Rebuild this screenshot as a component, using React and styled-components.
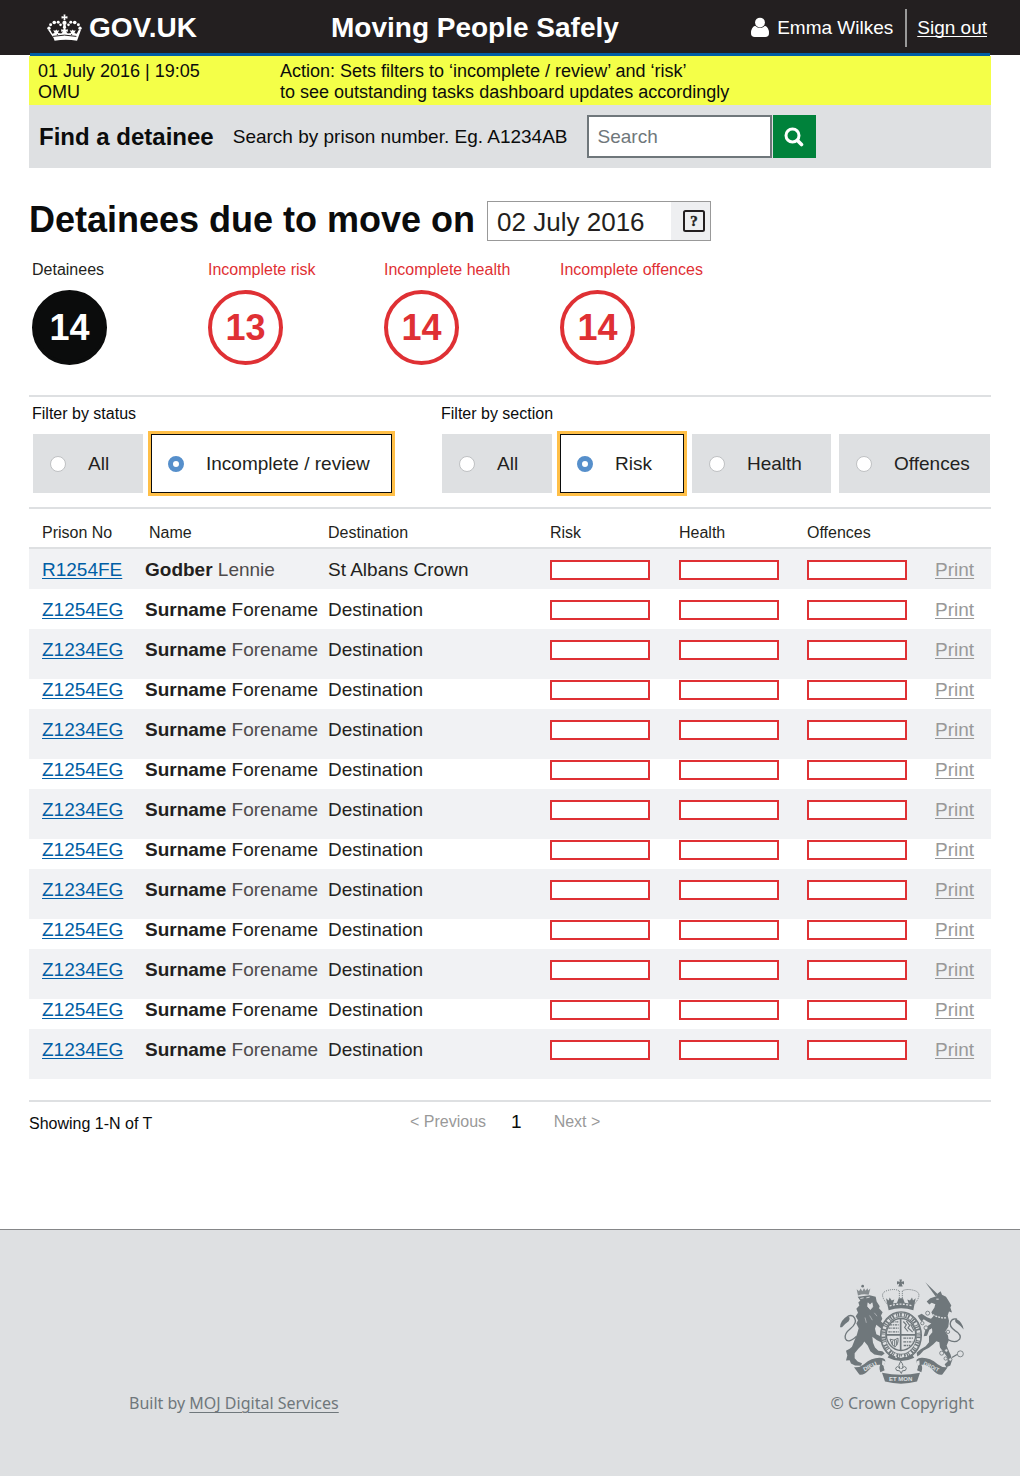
import React from "react";
import styled, { createGlobalStyle, css } from "styled-components";

const sans = `"Liberation Sans", Arial, Helvetica, sans-serif`;
const transport = `"Noto Sans", "Open Sans", sans-serif`;

const GlobalStyle = createGlobalStyle`
  *, *::before, *::after { box-sizing: border-box; }
  body {
    margin: 0;
    background: #fff;
    color: #231f20;
    font-family: ${sans};
    font-size: 19px;
    line-height: 20px;
  }
  input, button { font-family: inherit; }
`;

const Header = styled.header`
  display: grid;
  grid-template-columns: 284px 1fr auto;
  align-items: center;
  height: 55px;
  padding: 0 33px 0 47px;
  background: #231f20;
  color: #fff;
`;

const Brand = styled.a`
  display: flex;
  align-items: center;
  gap: 7px;
  color: #fff;
  font-size: 28px;
  font-weight: 700;
  line-height: 32px;
  text-decoration: none;
`;

const ProductName = styled.div`
  font-size: 28px;
  font-weight: 700;
  line-height: 32px;
`;

const Account = styled.div`
  display: flex;
  align-items: center;
`;

const UserName = styled.span`
  padding: 0 12px 0 8px;
`;

const SignOut = styled.a`
  display: flex;
  align-items: center;
  height: 38px;
  padding-left: 10px;
  border-left: 2px solid #999;
  color: #fff;
  text-decoration-thickness: 1px;
  text-underline-offset: 2px;
  text-decoration-skip-ink: none;
`;

const Main = styled.main`
  padding: 0 29px;
`;

const BlueBar = styled.div`
  height: 3px;
  margin: -2px 1px 0;
  background: #005ea5;
`;

const Notice = styled.section`
  display: grid;
  grid-template-columns: 242px 1fr;
  padding: 5px 9px 2px;
  background: #f4ff48;
  color: #0b0c0c;
  font-size: 18px;
  line-height: 21px;
`;

const NoticeText = styled.p`
  margin: 0;
`;

const SearchBar = styled.form`
  display: flex;
  align-items: center;
  height: 63px;
  padding: 0 10px;
  background: #dee0e2;
  color: #0b0c0c;
`;

const SearchTitle = styled.h2`
  margin: 0 19px 0 0;
  font-size: 24px;
  line-height: 28px;
`;

const SearchLabel = styled.label`
  margin-right: 19px;
`;

const SearchInput = styled.input`
  width: 185px;
  height: 43px;
  padding: 0 9px;
  border: 2px solid #6f777b;
  border-radius: 0;
  background: #fff;
  font-size: 19px;
  &::placeholder { color: #6f777b; opacity: 1; }
`;

const SearchButton = styled.button`
  display: flex;
  align-items: center;
  justify-content: center;
  width: 43px;
  height: 43px;
  margin-left: 1px;
  padding: 0;
  border: 0;
  background: #00823b;
`;

const HeadingRow = styled.div`
  display: flex;
  align-items: center;
  gap: 12px;
  padding-top: 33px;
`;

const Heading = styled.h1`
  margin: 0 0 2px;
  color: #0b0c0c;
  font-size: 36px;
  line-height: 38px;
`;

const DateField = styled.div`
  display: flex;
  width: 224px;
  height: 40px;
  border: 1px solid #999;
`;

const DateInput = styled.input`
  flex: 1;
  min-width: 0;
  padding: 2px 9px 0;
  border: 0;
  background: #fff;
  color: #231f20;
  font-size: 26px;
`;

const DateButton = styled.button`
  display: flex;
  align-items: center;
  justify-content: flex-end;
  width: 39px;
  padding: 0 5px 0 0;
  border: 0;
  background: #eeeff1;
`;

const Summary = styled.ul`
  display: grid;
  grid-template-columns: repeat(4, 176px);
  margin: 19px 0 30px;
  padding: 0 0 0 3px;
  list-style: none;
`;

const SummaryItem = styled.li`
  display: grid;
  gap: 10px;
  color: ${(p) => (p.$total ? "#231f20" : "#df3034")};
  font-size: 16px;
`;

const Count = styled.strong`
  display: flex;
  align-items: center;
  justify-content: center;
  width: 75px;
  height: 75px;
  border: 4px solid ${(p) => (p.$total ? "#0b0c0c" : "#df3034")};
  border-radius: 50%;
  background: ${(p) => (p.$total ? "#0b0c0c" : "#fff")};
  color: ${(p) => (p.$total ? "#fff" : "#df3034")};
  font-size: 36px;
  line-height: 40px;
`;

const Filters = styled.div`
  display: grid;
  grid-template-columns: 409px 1fr;
  padding: 7px 0 14px 4px;
  border: solid #dee0e2;
  border-width: 2px 0;
`;

const FilterGroup = styled.fieldset`
  min-width: 0;
  margin: 0;
  padding: 0;
  border: 0;
`;

const FilterLegend = styled.legend`
  margin: 0 0 10px -1px;
  padding: 0;
  color: #0b0c0c;
  font-size: 16px;
`;

const Options = styled.div`
  display: flex;
  gap: 8px;
`;

const Option = styled.label`
  display: flex;
  align-items: center;
  gap: 22px;
  width: ${(p) => p.$width}px;
  height: 59px;
  padding-left: 17px;
  background: #dee0e2;
  white-space: nowrap;
  ${(p) =>
    p.$selected &&
    css`
      padding-left: 16px;
      border: 1px solid #0b0c0c;
      outline: 3px solid #ffbf47;
      background: #fff;
    `}
`;

const Radio = styled.input`
  appearance: none;
  flex: none;
  width: 16px;
  height: 16px;
  margin: 0;
  border: 1px solid #bfc1c3;
  border-radius: 50%;
  background: #fff;
  &:checked { border: 5px solid #568fcb; }
`;

const Table = styled.table`
  width: 100%;
  table-layout: fixed;
  border-spacing: 0;
  text-align: left;
`;

const Column = styled.col`
  width: ${(p) => (p.$width ? `${p.$width}px` : "auto")};
`;

const HeadCell = styled.th`
  padding: 14px 0 4px ${(p) => p.$indent || 0}px;
  border-bottom: 2px solid #dee0e2;
  font-size: 16px;
  font-weight: 400;
`;

const rowSpace = {
  even: [11, 9],
  deep: [11, 19],
  tight: [1, 9],
};

const Row = styled.tr`
  background: ${(p) => (p.$shaded ? "#f1f2f4" : "#fff")};
  & > td {
    padding-top: ${(p) => rowSpace[p.$space][0]}px;
    padding-bottom: ${(p) => rowSpace[p.$space][1]}px;
  }
`;

const Cell = styled.td`
  padding: 0 0 0 ${(p) => p.$indent || 0}px;
  vertical-align: top;
  white-space: nowrap;
`;

const Forename = styled.span`
  color: ${(p) => (p.$soft ? "#4d4a4b" : "#231f20")};
`;

const RecordLink = styled.a`
  color: ${(p) => (p.$muted ? "#999" : "#005ea5")};
  text-decoration-thickness: 1px;
  text-underline-offset: 2px;
`;

const Progress = styled.div`
  width: 100px;
  height: 20px;
  border: 2px solid #df3034;
  background: #fff;
`;

const Pagination = styled.nav`
  display: grid;
  grid-template-columns: 381px 1fr;
  align-items: start;
  margin-top: 21px;
  padding: 10px 0 95px;
  border-top: 2px solid #dee0e2;
  color: #0b0c0c;
  font-size: 16px;
`;

const Showing = styled.p`
  margin: 2px 0 0;
`;

const Pages = styled.div`
  display: flex;
  align-items: center;
`;

const PageLink = styled.a`
  color: #999;
  text-decoration: none;
`;

const CurrentPage = styled.span`
  padding: 0 32px 0 25px;
  font-size: 19px;
`;

const Footer = styled.footer`
  display: flex;
  align-items: flex-end;
  justify-content: space-between;
  padding: 48px 46px 62px 129px;
  border-top: 1px solid #858688;
  background: #dee0e2;
  color: #6f777b;
  font-family: ${transport};
  font-size: 16px;
  line-height: 22px;
`;

const FooterText = styled.p`
  margin: 0;
`;

const FooterLink = styled.a`
  color: inherit;
  text-decoration-thickness: 1px;
  text-underline-offset: 3px;
`;

const Copyright = styled.div`
  display: grid;
  justify-items: end;
  gap: 7px;
`;

const Arms = styled.svg`
  margin-right: 9px;
`;

function CrownIcon() {
  const dots = [
    [146, 81, 5], [151, 71, 4.5], [162, 64, 5.5], [174, 63, 4.5], [181, 71, 4],
  ];
  return (
    <svg width="35" height="27" viewBox="140 39 106 80" fill="#fff" aria-hidden="true">
      {dots.map(([x, y, r]) => (
        <React.Fragment key={x}>
          <circle cx={x} cy={y} r={r} />
          <circle cx={386 - x} cy={y} r={r} />
        </React.Fragment>
      ))}
      <path d="M190 40h6l-1 6 7-1v7l-7-1 1 6h-6l1-6-7 1v-7l7 1z" />
      <circle cx="193" cy="65" r="6.5" />
      <path d="M190 70h6l2 9-2 4h-6l-2-4z" />
      <path d="M143 86l6-1 7 13 7-2-4-9 6 2 3-4 3 4 6-2-4 9 10 1 6-6-6 1v-8l6 2 4-8 4 8 6-2v8l-6-1 6 6 10-1-4-9 6 2 3-4 3 4 6-2-4 9 7 2 7-13 6 1-9 25-3 8q-34-6-68 0l-3-8z" />
      <path d="M157 106q36-8 72 0M171 99l1 3M215 99l-1 3" stroke="#231f20" strokeWidth="3" fill="none" />
    </svg>
  );
}

function UserIcon() {
  return (
    <svg width="18" height="21" viewBox="0 0 19 21" fill="#fff" aria-hidden="true">
      <circle cx="9.5" cy="5.3" r="5.2" />
      <path d="M4.3 8.7Q0 10.500 0 16.500 0 20.500 4 20.500h11q4 0 4-4 0-6-4.300-7.800Q9.500 13.600 4.300 8.700z" />
    </svg>
  );
}

function SearchIcon() {
  return (
    <svg width="20" height="20" viewBox="0 0 20 20" fill="none" stroke="#fff" aria-hidden="true">
      <circle cx="8.500" cy="8.500" r="6.500" strokeWidth="3" />
      <path d="M13.500 13.500l4 4" strokeWidth="3.600" strokeLinecap="round" />
    </svg>
  );
}

function HelpIcon() {
  return (
    <svg width="22" height="22" viewBox="0 0 22 22" fill="none" stroke="#231f20" aria-hidden="true">
      <rect x="1" y="1" width="20" height="20" rx="1.500" strokeWidth="2" />
      <text x="11" y="16" textAnchor="middle" fontFamily="Liberation Serif, serif" fontSize="15" fontWeight="700" fill="#231f20" strokeWidth="0.500">?</text>
    </svg>
  );
}

function RoyalArms() {
  const ink = "#6f777b";
  const paper = "#dee0e2";
  const motto = { fill: paper, fontFamily: "Liberation Sans, sans-serif", fontWeight: 700, fontSize: 18, textAnchor: "middle" };
  return (
    <Arms width="126" height="107" viewBox="58 38 378 320" fill={ink} aria-hidden="true">
      {/* lion */}
      <path d="M115 90l-4-19 7 6 5-8 5 8 5-9 5 8 5-8 3 7 6-6-5 19q-16-4-32 2z" opacity=".8" />
      <circle cx="129" cy="62" r="4" />
      <path d="M114 94L150 89 168 94 171 108 180 122 178 128 189 140 184 150 188 160 184 168 198 180 199 194 188 192 170 178 166 190 170 206 186 214 198 224 192 234 172 224 158 214 160 232 166 246 176 256 188 257 195 264 186 271 164 267 152 257 144 240 134 228 128 238 116 250 105 263 105 278 114 288 127 293 124 301 106 300 94 294 90 284 79 285 83 270 79 256 90 250 97 244 104 226 112 206 117 188 110 174 115 164 108 152 115 142 110 130 119 120 116 110 122 106z" />
      <path d="M122 99l10-2M140 97l10-2M145 112l6 6 6-6 2 12-7 8-8-9z" stroke={paper} strokeWidth="2.500" fill={paper} />
      <path d="M150 150l8 14M136 156l4 16M164 142l8 10" stroke={paper} strokeWidth="1.500" />
      <path d="M110 213Q84 236 77 219q-4-14 15-29 21-17 13-32-6-12-20-6" fill="none" stroke={ink} strokeWidth="4" />
      <path d="M61 185q1-20 23-34 10 6 3 16-8 5-20 18z" />
      {/* unicorn */}
      <path d="M317 50l38 37-7 6z" />
      <path d="M350 92L354 84 363 77 367 88 379 94 388 108 395 120 392 126 397 141 388 138 384 150 388 166 386 184 377 198 385 210 387 226 381 240 387 256 393 268 397 284 392 300 380 305 375 296 384 288 382 274 370 258 361 246 359 230 350 227 341 236 328 247 312 255 301 267 293 273 291 262 302 252 318 242 328 230 328 212 338 200 337 188 329 193 322 211 312 212 317 193 326 180 335 174 324 169 312 161 306 169 299 160 294 151 306 145 322 155 334 160 341 152 335 140 344 127 347 116 336 112 329 117 321 108 332 98z" />
      <path d="M339 147q20 12 43 10" stroke={paper} strokeWidth="4" strokeDasharray="6 3" fill="none" />
      <path d="M350 101h7" stroke={paper} strokeWidth="3" />
      <path d="M384 222q24 13 36-1 7-13-13-25-20-13-14-27 5-12 19-8" fill="none" stroke={ink} strokeWidth="4" />
      <path d="M432 192q-3-22-24-33-5 11 6 16 8 5 18 17z" />
      <g fill={paper} stroke={ink} strokeWidth="2.500">
        <circle cx="324" cy="143" r="6" />
        <circle cx="319" cy="187" r="6" />
        <circle cx="308" cy="173" r="5" />
        <circle cx="385" cy="199" r="5" />
        <circle cx="380" cy="255" r="5" />
        <circle cx="366" cy="263" r="6" />
        <circle cx="378" cy="279" r="5" />
        <circle cx="392" cy="282" r="5" />
        <circle cx="422" cy="265" r="9" />
      </g>
      <path d="M397 276l15-9" stroke={ink} strokeWidth="4" />
      {/* garter and shield */}
      <ellipse cx="244" cy="210" rx="61" ry="71" fill={paper} stroke={ink} strokeWidth="4" />
      <ellipse cx="244" cy="210" rx="53" ry="62" fill="none" stroke={ink} strokeWidth="14" />
      <ellipse cx="244" cy="210" rx="53" ry="62" fill="none" stroke={paper} strokeWidth="10" strokeDasharray="3 5 7 3 2 4" />
      <ellipse cx="244" cy="207" rx="44" ry="48" fill={paper} stroke={ink} strokeWidth="4" />
      <path d="M243 159v97M200 208h88" stroke={ink} strokeWidth="5" />
      <g stroke={ink} fill="none" strokeWidth="4">
        <path d="M211 178h26M206 188h31M206 199h31M216 169h20" strokeDasharray="7 2 3 2" />
        <path d="M251 218h29M251 229h27M252 240h20" strokeDasharray="8 2 4 2" />
        <path d="M251 168l9 10-5 8 10 12M260 166l10 14-5 7 14 13M273 176l10 20" strokeWidth="3.500" />
        <path d="M211 221q4 16 14 24 12-8 10-27l-12 6zM218 226v14M225 223v20M231 224v15" strokeWidth="3" />
      </g>
      <path d="M211 265q32 22 65 1l8 11q-41 20-80-1z" />
      <path d="M227 273l4 4M240 275h8M258 274l4-3" stroke={paper} strokeWidth="4" />
      {/* crown */}
      <path d="M239 42h8l-2 7 8-2v10l-7-3 3 9h-13l3-9-7 3v-10l9 2z" />
      <g fill="none" stroke={ink} strokeWidth="3" strokeDasharray="3 3">
        <path d="M203 116q-27-31-3-40 24-8 39 0M284 116q26-31 3-40-24-8-39 0" />
        <path d="M239 77v27M248 77v27" />
      </g>
      <path d="M199 98l8 7 3-9 6 9 8-3-4 12 12-2 5-14h13l5 14 12 2-4-12 8 3 6-9 3 9 8-7-7 36q-36-11-74 0z" />
      <path d="M210 121q33-10 67 0" fill="none" stroke={paper} strokeWidth="4" strokeDasharray="6 4" />
      {/* motto scroll */}
      <path d="M103 305q14 3 30-9 24-20 48-19 22 2 14 17-6 8 0 20l-13 6q-5-14 0-22-16-2-32 13-18 20-31 16zM384 305q-14 3-30-9-24-20-48-19-22 2-14 17 6 8 0 20l13 6q5-14 0-22 16-2 32 13 18 20 31 16z" />
      <path d="M187 322q57 12 114 0l-9 26q-48 13-96 0z" />
      <path d="M188 284l9 4-4 14-6-5zM299 284l-9 4 4 14 6-5z" fill={paper} />
      <text x="151" y="309" transform="rotate(-27 151 303)" {...motto}>DIEU</text>
      <text x="243" y="346" {...motto}>ET MON</text>
      <text x="335" y="309" transform="rotate(27 335 303)" {...motto} fontSize={16}>DROIT</text>
      <path d="M243 287q12 14 3 23 10-13 14-1 0 8-12 7l-3 8-5-8q-12 1-12-7 5-12 13 1-8-9 2-23z" fill={paper} stroke={ink} strokeWidth="3" />
    </Arms>
  );
}

const summary = [
  { label: "Detainees", count: 14, total: true },
  { label: "Incomplete risk", count: 13 },
  { label: "Incomplete health", count: 14 },
  { label: "Incomplete offences", count: 14 },
];

const filters = [
  {
    name: "status",
    legend: "Filter by status",
    options: [
      { label: "All", width: 110 },
      { label: "Incomplete / review", width: 241, selected: true },
    ],
  },
  {
    name: "section",
    legend: "Filter by section",
    options: [
      { label: "All", width: 110 },
      { label: "Risk", width: 124, selected: true },
      { label: "Health", width: 139 },
      { label: "Offences", width: 151 },
    ],
  },
];

const columns = [
  { label: "Prison No", width: 116, indent: 13 },
  { label: "Name", width: 183, indent: 4 },
  { label: "Destination" },
  { label: "Risk", width: 129 },
  { label: "Health", width: 128 },
  { label: "Offences", width: 128 },
  { label: "", width: 56 },
];

const detainees = [
  { id: "R1254FE", surname: "Godber", forename: "Lennie", destination: "St Albans Crown" },
  ...Array.from({ length: 12 }, (_, i) => ({
    id: i % 2 ? "Z1234EG" : "Z1254EG",
    surname: "Surname",
    forename: "Forename",
    destination: "Destination",
  })),
];

function spaceFor(index) {
  if (index < 2) return "even";
  return index % 2 ? "tight" : "deep";
}

function FilterOptions({ name, legend, options }) {
  const [value, setValue] = React.useState(options.find((o) => o.selected).label);
  return (
    <FilterGroup>
      <FilterLegend>{legend}</FilterLegend>
      <Options>
        {options.map((o) => (
          <Option key={o.label} $width={o.width} $selected={value === o.label}>
            <Radio
              type="radio"
              name={name}
              checked={value === o.label}
              onChange={() => setValue(o.label)}
            />
            {o.label}
          </Option>
        ))}
      </Options>
    </FilterGroup>
  );
}

function DetaineeTable() {
  return (
    <Table>
      <colgroup>
        {columns.map((c) => <Column key={c.label} $width={c.width} />)}
      </colgroup>
      <thead>
        <tr>
          {columns.map((c) => <HeadCell key={c.label} $indent={c.indent}>{c.label}</HeadCell>)}
        </tr>
      </thead>
      <tbody>
        {detainees.map((d, i) => (
          <Row key={i} $shaded={i % 2 === 0} $space={spaceFor(i)}>
            <Cell $indent={13}><RecordLink href="#record">{d.id}</RecordLink></Cell>
            <Cell><b>{d.surname}</b> <Forename $soft={i % 2 === 0}>{d.forename}</Forename></Cell>
            <Cell>{d.destination}</Cell>
            <Cell><Progress /></Cell>
            <Cell><Progress /></Cell>
            <Cell><Progress /></Cell>
            <Cell><RecordLink $muted href="#print">Print</RecordLink></Cell>
          </Row>
        ))}
      </tbody>
    </Table>
  );
}

export default function App() {
  return (
    <>
      <GlobalStyle />
      <Header>
        <Brand href="#home"><CrownIcon />GOV.UK</Brand>
        <ProductName>Moving People Safely</ProductName>
        <Account>
          <UserIcon />
          <UserName>Emma Wilkes</UserName>
          <SignOut href="#sign-out">Sign out</SignOut>
        </Account>
      </Header>
      <Main>
        <BlueBar />
        <Notice>
          <NoticeText>01 July 2016 | 19:05<br />OMU</NoticeText>
          <NoticeText>
            Action: Sets filters to ‘incomplete / review’ and ‘risk’<br />
            to see outstanding tasks dashboard updates accordingly
          </NoticeText>
        </Notice>
        <SearchBar onSubmit={(e) => e.preventDefault()}>
          <SearchTitle>Find a detainee</SearchTitle>
          <SearchLabel htmlFor="prison-number">Search by prison number. Eg. A1234AB</SearchLabel>
          <SearchInput id="prison-number" type="text" placeholder="Search" />
          <SearchButton type="submit" aria-label="Search"><SearchIcon /></SearchButton>
        </SearchBar>
        <HeadingRow>
          <Heading><label htmlFor="move-date">Detainees due to move on</label></Heading>
          <DateField>
            <DateInput id="move-date" type="text" defaultValue="02 July 2016" />
            <DateButton type="button" aria-label="Choose a date"><HelpIcon /></DateButton>
          </DateField>
        </HeadingRow>
        <Summary>
          {summary.map((s) => (
            <SummaryItem key={s.label} $total={s.total}>
              {s.label}
              <Count $total={s.total}>{s.count}</Count>
            </SummaryItem>
          ))}
        </Summary>
        <Filters>
          {filters.map((f) => <FilterOptions key={f.name} {...f} />)}
        </Filters>
        <DetaineeTable />
        <Pagination aria-label="Pages">
          <Showing>Showing 1-N of T</Showing>
          <Pages>
            <PageLink href="#previous">&lt; Previous</PageLink>
            <CurrentPage aria-current="page">1</CurrentPage>
            <PageLink href="#next">Next &gt;</PageLink>
          </Pages>
        </Pagination>
      </Main>
      <Footer>
        <FooterText>Built by <FooterLink href="#moj">MOJ Digital Services</FooterLink></FooterText>
        <Copyright>
          <RoyalArms />
          <FooterText>© Crown Copyright</FooterText>
        </Copyright>
      </Footer>
    </>
  );
}
